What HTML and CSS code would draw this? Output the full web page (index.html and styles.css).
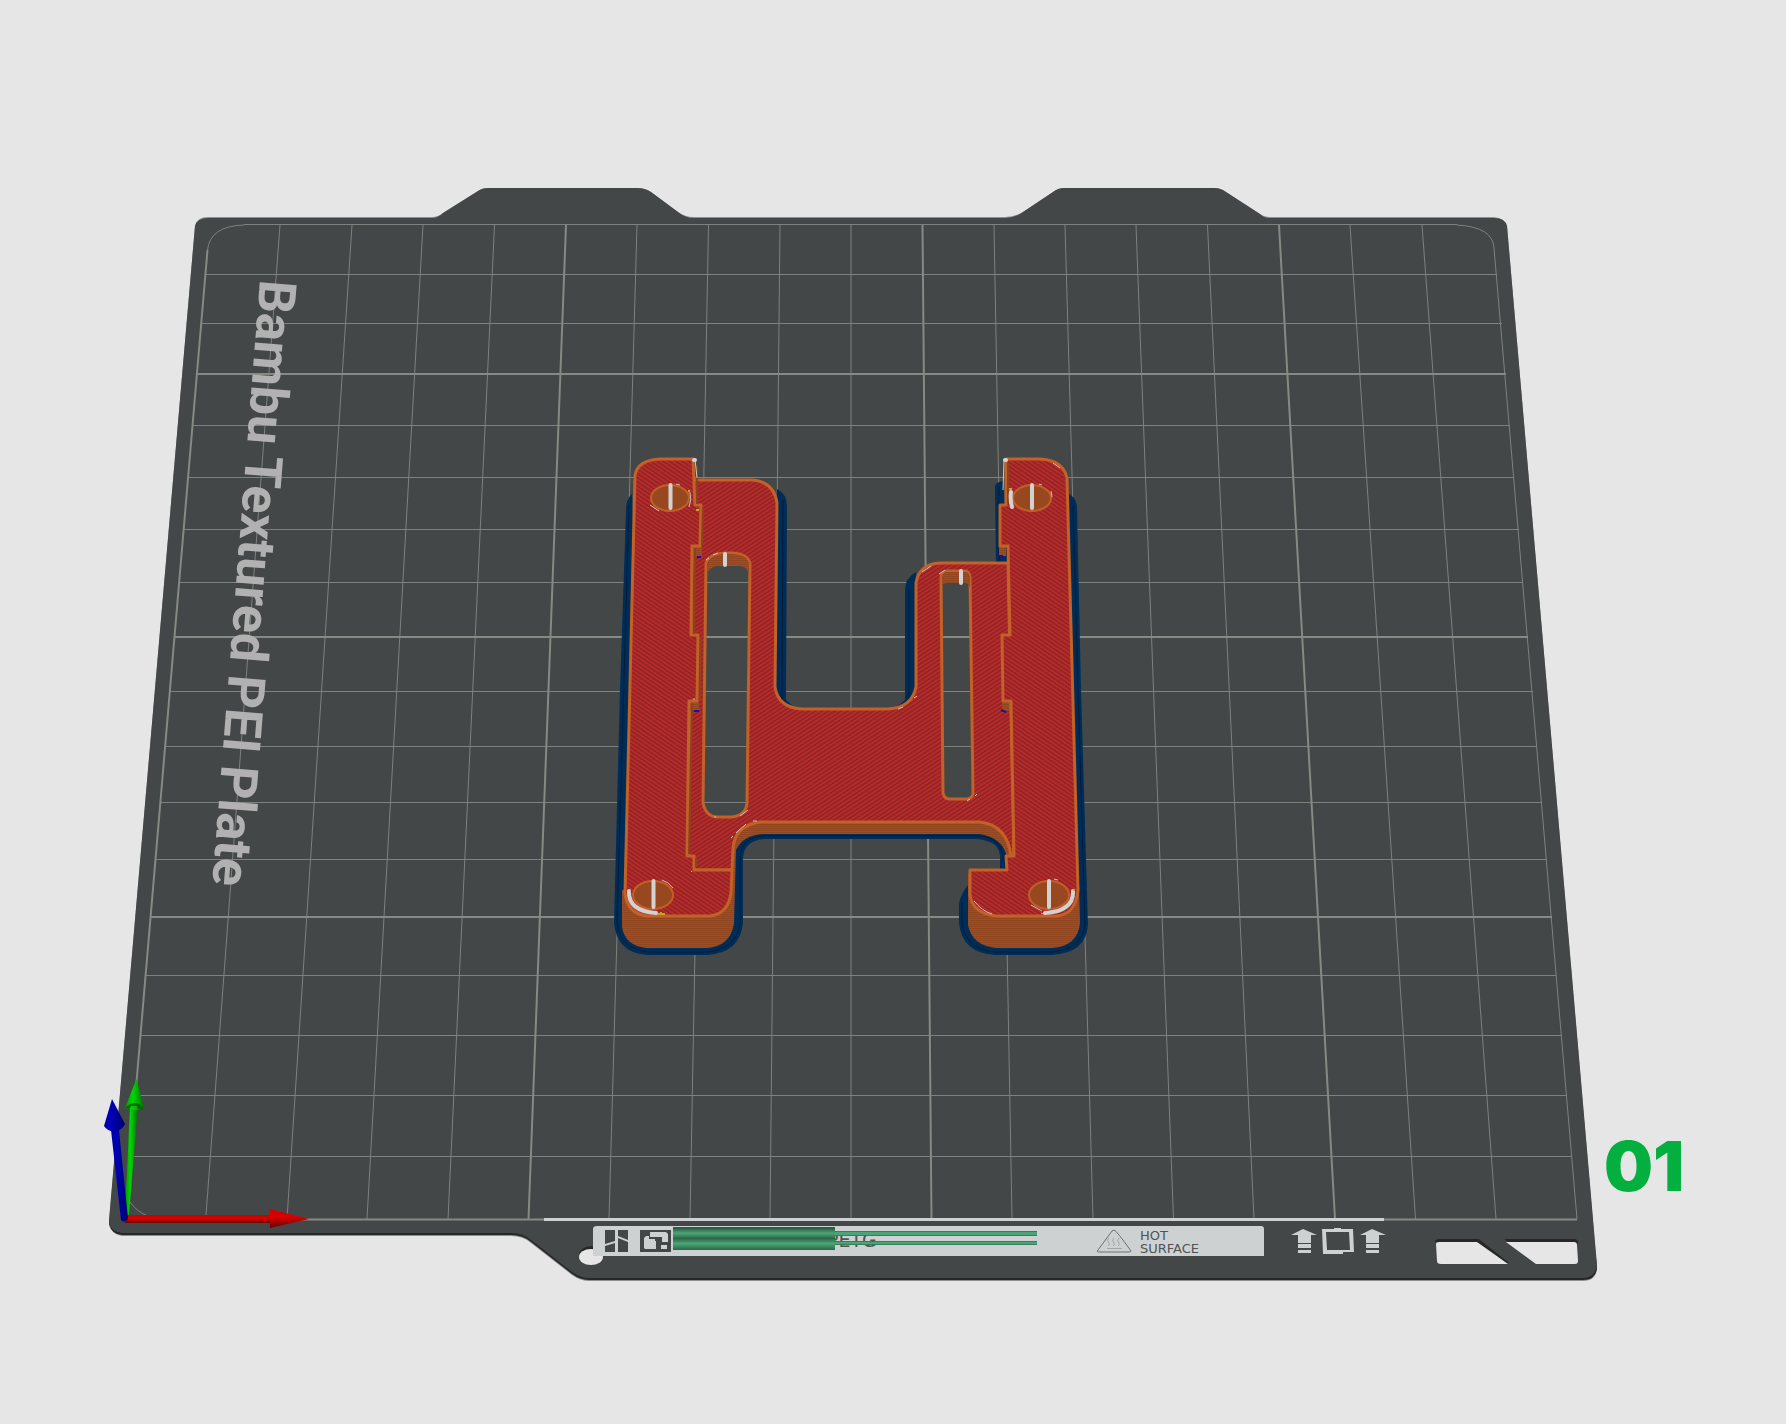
FILE: index.html
```html
<!DOCTYPE html>
<html lang="en">
<head>
<meta charset="utf-8">
<title>Plate preview</title>
<link rel="stylesheet" href="styles.css">
</head>
<body>
<main class="viewport">
<svg class="scene" viewBox="0 0 1786 1424" role="img" aria-label="Sliced model on a textured PEI plate">
  <defs>
    <pattern id="hatch-down" width="7" height="7" patternUnits="userSpaceOnUse" patternTransform="rotate(34)">
      <rect class="infill" width="7" height="7"/><path class="infill-gap" d="M0 1H7M0 4.500H7"/>
    </pattern>
    <pattern id="hatch-up" width="7" height="7" patternUnits="userSpaceOnUse" patternTransform="rotate(-33)">
      <rect class="infill" width="7" height="7"/><path class="infill-gap" d="M0 1H7M0 4.500H7"/>
    </pattern>
    <pattern id="layers" width="8" height="2" patternUnits="userSpaceOnUse">
      <rect width="8" height="2" fill="#a04d23"/><rect width="8" height="1" fill="#914620"/>
    </pattern>
    <linearGradient id="tube" x2="0" y2="1">
      <stop offset="0" stop-color="#2a5f44"/><stop offset=".06" stop-color="#2a5f44"/>
      <stop offset=".27" stop-color="#4ba777"/><stop offset=".5" stop-color="#2c6648"/>
      <stop offset=".72" stop-color="#4ba777"/><stop offset="1" stop-color="#2c6648"/>
    </linearGradient>
    <linearGradient id="x-axis" x2="0" y2="1">
      <stop offset="0" stop-color="#c80000"/><stop offset=".4" stop-color="#dc0000"/><stop offset="1" stop-color="#6c0000"/>
    </linearGradient>
    <linearGradient id="y-axis">
      <stop offset="0" stop-color="#009600"/><stop offset=".4" stop-color="#00d800"/><stop offset="1" stop-color="#007000"/>
    </linearGradient>
    <linearGradient id="z-axis">
      <stop offset="0" stop-color="#0000a0"/><stop offset=".3" stop-color="#0000bc"/><stop offset="1" stop-color="#000068"/>
    </linearGradient>
  </defs>

  <!-- Plate -->
  <path class="plate-rim" d="M195 226Q197 217 208 217H432Q438 217 443 213L478 191Q482 188 488 188H637Q645 188 651 192L678 212Q685 217 694 217H1005Q1015 217 1023 212L1053 192Q1058 188 1064 188H1214Q1221 188 1226 192L1260 214Q1264 217 1269 217H1494Q1505 218 1507 226L1597 1268Q1596 1281 1583 1281H590Q580 1281 572 1275L531 1243Q523 1236 511 1236H122Q109 1233 109 1222Z"/>
  <path class="plate-side" d="M109 1219V1224Q112 1235 122 1235H511Q523 1235 531 1242L572 1274Q580 1280 590 1280H1583Q1596 1280 1597 1268L1596 1258H560L530 1230L120 1225Z"/>
  <path class="plate" d="M195 226Q197 218 208 218H432Q438 218 443 213L478 191Q482 188 488 188H637Q645 188 651 192L678 212Q685 218 694 218H1005Q1015 218 1023 212L1053 192Q1058 188 1064 188H1214Q1221 188 1226 192L1260 214Q1264 218 1269 218H1494Q1505 218 1507 226L1597 1265Q1595 1278 1583 1278H590Q580 1278 572 1272L531 1240Q523 1233 511 1233H122Q109 1231 109 1220Z"/>

  <!-- Grid: 10 mm lines, then every fifth line bold -->
  <path class="grid" d="M244 224.500H1457M205 274.500H1497M201 323.500H1502M192 425.500H1510M188 477.500H1514M183 529.500H1519M179 582.500H1523M170 691.500H1533M165 746.500H1537M160 802.500H1542M155 859.500H1547M146 975.500H1556M140 1035.500H1562M135 1095.500H1567M130 1156.500H1572
  M280 225L206 1215M352 225L287 1219M423 225L367 1219M494.500 225L448 1219M637 225L609 1219M708.500 225L690 1219M780 225L770 1219M851 225V1219M994 225L1012 1219M1065 225L1093 1219M1136 225L1173.500 1219M1207.500 225L1254 1219M1350 225L1415.500 1219M1422 225L1496 1219M1494 248L1577 1219
  M244 225Q210 226 207.500 250M1457 225Q1493 227 1494 248M130 1202Q137 1212 148 1216"/>
  <path class="grid grid-bold" d="M196 374H1506M174 637H1528M150 917H1552M126 1219.500H1577M207.500 250L126 1205M566 225L528.500 1219M922.500 225L931.500 1219M1279 225L1335 1219"/>
  <text class="plate-name" transform="translate(260 279) rotate(94.500)">Bambu Textured PEI Plate</text>

  <!-- Label strip along the front edge -->
  <rect class="label" x="544" y="1218" width="840" height="3"/>
  <ellipse class="side-dark" cx="591" cy="1255" rx="12" ry="9"/>
  <ellipse class="backdrop" cx="591" cy="1257" rx="12" ry="8"/>
  <path class="label" d="M593 1229Q593 1226 597 1226H1261Q1264 1226 1264 1229V1256H593Z"/>
  <path class="ink" d="M605 1230H615V1241L605 1244ZM605 1246L615 1243V1252H605ZM618 1230V1236L628 1240V1230ZM618 1238L628 1242V1252H618Z"/>
  <rect class="ink" x="640" y="1230" width="31" height="22"/>
  <path class="label" d="M650 1232H666L668 1234V1242H662V1237H650ZM646 1236H649V1239H656V1249H645L644 1248V1238ZM661 1245H667V1249H661Z"/>
  <path class="ink" d="M655 1238H661V1250H657V1241H655Z"/>
  <text class="print petg" x="827" y="1247">PETG</text>
  <path class="outline-ink" d="M1114 1230Q1116 1230 1131 1251Q1131 1252 1129 1252H1099Q1096 1252 1098 1250L1112 1231Z"/>
  <path class="outline-ink heat" d="M1109 1238Q1106 1240 1109 1243Q1110 1245 1108 1246M1114 1238Q1111 1240 1114 1243Q1115 1245 1113 1246M1119 1238Q1116 1240 1119 1243Q1120 1245 1118 1246M1107 1248.500H1122"/>
  <text class="print" x="1140" y="1240">HOT</text>
  <text class="print" x="1140" y="1253">SURFACE</text>
  <rect x="673" y="1227" width="162" height="23" fill="url(#tube)"/>
  <path class="purge-dark" d="M835 1231H1037V1236H835ZM835 1241H1037V1245H835Z"/>
  <path class="purge" d="M835 1232H1037V1235H835ZM835 1242H1037V1244H835Z"/>
  <path class="label" d="M1303 1229L1317 1235H1311V1243H1298V1235H1291ZM1298 1244H1311V1248H1298ZM1298 1250H1311V1253H1298ZM1372 1229L1386 1235H1379V1243H1366V1235H1360ZM1366 1244H1379V1248H1366ZM1366 1250H1379V1253H1366Z"/>
  <path class="label" fill-rule="evenodd" d="M1322 1229H1334V1228H1341V1229H1353L1354 1252H1343V1254H1323ZM1326 1232L1327 1250H1350L1349 1232Z"/>
  <path class="side-dark" d="M1435 1242Q1435 1239 1439 1239H1479L1509 1263L1506 1264ZM1504 1239H1574Q1578 1239 1578 1243L1577 1245L1510 1243Z"/>
  <path class="backdrop" d="M1436 1244Q1436 1242 1439 1242H1477L1508 1264H1441Q1437 1264 1437 1261ZM1506 1242H1574Q1577 1242 1577 1245L1578 1261Q1578 1264 1575 1264H1536Z"/>

  <!-- Brim -->
  <path class="brim" d="M632 494Q626 499 626 510L620 690L614 923Q617 953 647 955H707Q740 953 743 923V857Q745 840 765 839H977Q1000 841 1000 857V885H968Q959 897 959 905V923Q962 953 995 955H1052Q1086 953 1088 925L1081 690L1077 507Q1076 496 1066 492L1060 830H640ZM777 489Q787 494 787 506L786 700L800 712H770ZM916 572Q905 578 905 590V700L890 712H925ZM995 486Q996 482 1003 481L1010 565H996Z"/>
  <path class="brim-line" d="M629 505L617 923Q620 949 648 952H707Q737 949 740 923V857Q742 836 765 836H979Q1003 838 1003 860M962 903V923Q965 949 995 952H1052Q1082 949 1085 925L1078 690L1073 505M783 500L782 700M909 590V700M999 486V563"/>

  <!-- Side walls -->
  <path class="wall" d="M622 890V927Q625 946 647 948H707Q731 946 734 923L736 850Q743 835 763 834H980Q1003 838 1007 857L1014 856L1000 815H740L725 870ZM968 873V925Q972 946 997 948H1052Q1078 946 1080 923L1079 885Z"/>

  <!-- Top faces -->
  <path class="face up" fill-rule="evenodd" d="M693 480H753Q774 482 777 503L775 687Q778 708 803 709H887Q912 708 916 687V583Q919 564 940 563H1008L1014 856H1011Q1007 825 980 822H760Q734 826 733 849L732 870H688ZM706 563L703 803Q706 817 718 817H732Q746 815 747 803L750 563Q747 554 733 553H725Q709 554 706 563ZM941 577L943 793Q944 799 950 799H967Q973 798 973 793L970 577Q969 571 965 571H947Q942 571 941 577Z"/>
  <path class="wall" d="M708 572V564Q710 554 725 554H733Q748 555 749 564V574Q746 566 740 566H717Q711 567 708 572ZM942 586V577Q943 572 947 572H965Q969 572 970 577V587Q968 583 965 583H947Q943 583 942 586Z"/>
  <path class="wall" d="M693 546H702V556H693ZM690 701H699V711H690ZM999 546H1006V556H999ZM1002 701H1009V711H1002Z"/>
  <path class="seam-blue" d="M697 557H701M694 711H699M998 556H1003M1001 710L1006 712"/>
  <path class="face down" d="M635 475Q638 460 660 459H693L695 505H701L700 546H692L691 635H698L697 701H689L687 856H694V870H732L731 893Q728 914 710 916H648Q627 914 625 893Z"/>
  <path class="face down" d="M1006 459H1040Q1063 460 1067 478L1078 890Q1076 914 1057 916H997Q973 914 970 895V870H1007L1006 856H1014L1011 701H1003L1002 635H1010L1008 546H1000V505H1006Z"/>
  <path class="inner-edge" d="M697 466V504M703 507L702 545M695 548L694 634M701 637L700 700M692 703L689 854M696 858V867M1008 462V503"/>

  <!-- Screw holes -->
  <g class="hole">
    <ellipse cx="670" cy="498" rx="19" ry="13"/><ellipse cx="1032" cy="498" rx="19" ry="13"/>
    <ellipse cx="653" cy="895" rx="20" ry="14"/><ellipse cx="1049" cy="895" rx="20" ry="14"/>
  </g>

  <!-- Seams and travel marks -->
  <path class="seam" d="M670.500 485V508M1032 485V508M653.500 881V907M1049 881V907M725 554V565M961 571V583"/>
  <path class="seam-arc" d="M629 891Q628 911 656 913M1073 891Q1074 911 1045 913M1011 492Q1010 500 1012 507"/>
  <path class="mark" d="M695 459L697 478M1004 459L1003 490M650 505L659 511M690 492Q692 500 689 507M662 880Q669 882 673 888M974 901Q982 911 992 914M1031 905L1042 911M1053 463L1060 468M922 572L931 566M939 574L945 570M1039 484L1042 485M1051 491L1052 497M736 833L746 824M731 838L733 836M740 816L748 810M753 821H757M706 560L709 558M713 555L718 553M898 709L903 707M914 698L917 696M967 801L970 799M975 796L977 794M691 872L692 871M714 817H716M694 698V700M676 484L680 485M1054 879L1058 880"/>
  <path class="tip" d="M694 460H695M1005 460H1006"/>
  <path class="dot-yellow" d="M658 914H665M661 912V914M1009 489H1012M1042 913V914M688 491H690M696 510H699M1073 890H1075"/>

  <!-- Axes -->
  <path fill="url(#y-axis)" d="M125 1215L130 1106H138L129 1215Z"/>
  <path fill="url(#y-axis)" d="M136.500 1079L144 1108Q135 1112 125 1108Z"/>
  <path fill="#006c00" d="M125 1108Q135 1098 144 1108L143 1110L138 1109L137 1106H131L129 1109Z"/>
  <path fill="url(#x-axis)" d="M125 1215H270V1223H125Z"/>
  <path fill="url(#x-axis)" d="M270 1209L309 1219L270 1228Z"/>
  <path fill="url(#z-axis)" d="M111 1130H119L128 1219Q124 1224 121 1220Z"/>
  <path fill="url(#z-axis)" d="M112 1099L125 1124Q122 1130 115 1132Q107 1131 104 1126Z"/>

  <text class="plate-number" x="1604" y="1191">01</text>
</svg>
</main>
</body>
</html>
```
FILE: styles.css
```css
body {
  margin: 0;
  background: #e6e6e6;
}

.viewport {
  display: flex;
}

.scene {
  flex: 1;
  width: 100%;
  height: auto;
}

.plate { fill: #444747; }
.plate-rim { fill: #8e908f; }
.plate-side,
.side-dark { fill: #262828; }
.backdrop { fill: #e6e6e6; }

.grid {
  fill: none;
  stroke: #7e827e;
  stroke-width: 1;
}

.grid-bold {
  stroke: #868a84;
  stroke-width: 2;
}

.plate-name {
  fill: #b2b1b2;
  font: 700 52px Roboto, "Liberation Sans", sans-serif;
}

.label { fill: #cdd1d1; }
.ink { fill: #444747; }

.outline-ink {
  fill: none;
  stroke: #6d7070;
}

.heat { stroke: #a2a6a6; }

.print {
  fill: #505353;
  font: 13px "DejaVu Sans", sans-serif;
}

.petg { font-size: 19px; }

.purge { fill: #4aa475; }
.purge-dark { fill: #3a7d5a; }

.brim { fill: #002d57; }

.brim-line {
  fill: none;
  stroke: #001c38;
}

.wall { fill: url(#layers); }
.infill { fill: #c02a2e; }

.infill-gap {
  stroke: #82241f;
  stroke-width: 1.5;
}

.face {
  stroke: #c26128;
  stroke-width: 3;
  stroke-linejoin: round;
}

.up { fill: url(#hatch-up); }
.down { fill: url(#hatch-down); }

.inner-edge {
  fill: none;
  stroke: #8c421c;
  stroke-width: 2;
}

.hole {
  fill: #98481f;
  stroke: #c25f28;
  stroke-width: 2;
}

.seam,
.seam-arc,
.tip {
  fill: none;
  stroke: #d2d2d2;
  stroke-width: 4;
  stroke-linecap: round;
}

.mark {
  fill: none;
  stroke: #c9c5c2;
  stroke-width: 1;
}

.dot-yellow {
  stroke: #c0a820;
  stroke-width: 2;
}

.seam-blue {
  stroke: #1414a0;
  stroke-width: 2;
}

.plate-number {
  fill: #03b03f;
  font: 900 69px Inter, "Open Sans", sans-serif;
}
```
